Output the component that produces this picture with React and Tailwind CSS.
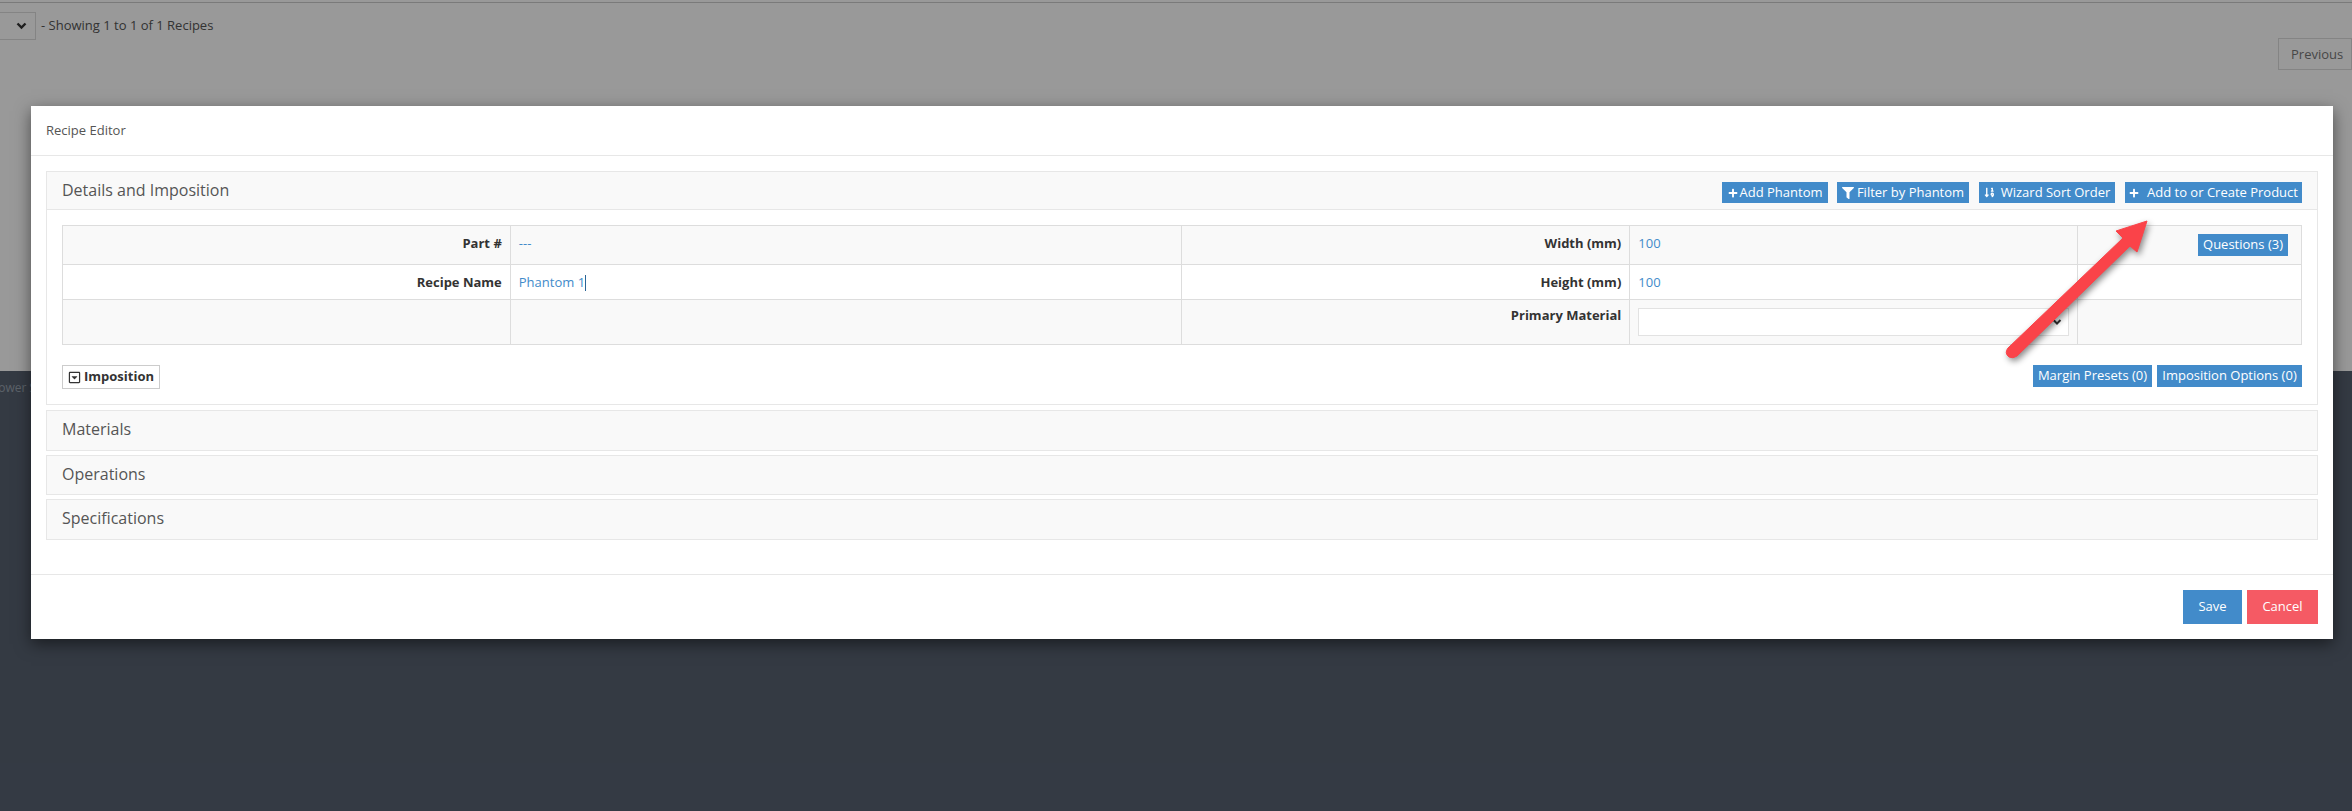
import React from "react";
import { FaPlus, FaFilter, FaSortNumericDown, FaRegCaretSquareDown } from "react-icons/fa";

const font = "font-['Open_Sans',sans-serif]";
const cell = "border border-[#ddd]";

function BlueButton({ className = "", children }) {
  return (
    <span className={`flex items-center justify-center whitespace-nowrap bg-[#428bca] text-[13px] text-white ${className}`}>
      {children}
    </span>
  );
}

function CollapsedPanel({ title, height }) {
  return (
    <div className={`flex items-center border border-[#e7e7e7] bg-[#f9f9f9] pb-[3px] pl-[15px] text-[16px] text-[#555] ${height}`}>
      {title}
    </div>
  );
}

function Arrow() {
  // red annotation pointing at the product button
  return (
    <svg
      className="absolute left-[1960px] top-[105px] drop-shadow-[2px_3px_3px_rgba(0,0,0,0.45)]"
      width="180"
      height="170"
      viewBox="1990 211 180 170"
    >
      <path
        d="M2146 221 L2115 231 L2122 238 L2007 348 Q2003 353 2008 357 Q2012 359 2016 356 L2129 246 L2136 252 Z"
        fill="#fa4349"
        stroke="#fa4349"
        strokeLinejoin="round"
      />
    </svg>
  );
}

export default function App() {
  return (
    <div className={`relative h-[811px] w-[2352px] overflow-hidden bg-white ${font}`}>
      {/* page behind the dialog */}
      <div className="h-[371px] pt-[2px]">
        <div className="h-px bg-[#ccc]" />
        <div className="flex items-center pt-[9px]">
          <div className="ml-[-2px] flex h-[28px] w-[38px] items-center justify-end border border-[#ddd] pr-[8px] text-[#333]">
            <svg width="11" height="8" viewBox="0 0 11 8">
              <path d="M1.5 1.5 L5.5 5.5 L9.5 1.5" fill="none" stroke="currentColor" strokeWidth="2.4" />
            </svg>
          </div>
          <span className="ml-[5px] text-[13px] text-[#555]">- Showing 1 to 1 of 1 Recipes</span>
        </div>
        <div className="mt-[-2px] flex justify-end">
          <span className="flex h-[32px] w-[74px] items-center border border-[#ddd] pl-[12px] pt-[1px] text-[13px] text-[#777]">
            Previous
          </span>
        </div>
      </div>
      <div className="h-[440px] bg-[#576171] pt-[8px]">
        <span className="ml-[-9px] block text-[12px] text-[#9aa3af]">Power Software</span>
      </div>

      {/* backdrop */}
      <div className="absolute inset-0 bg-black/40" />

      {/* dialog */}
      <div className="absolute left-[31px] top-[106px] h-[533px] w-[2302px] bg-white text-[#333] shadow-[0_5px_15px_rgba(0,0,0,0.5)]">
        <div className="flex h-[50px] items-center border-b border-[#e7e7e7] pl-[15px] pt-[1px] text-[13px] text-[#555]">
          Recipe Editor
        </div>

        <div className="h-[418px] px-[15px] pt-[15px]">
          <div className="h-[234px] border border-[#e7e7e7]">
            <div className="flex h-[38px] justify-between border-b border-[#e7e7e7] bg-[#f9f9f9] pl-[15px] pr-[15px] text-[16px] text-[#555]">
              <span className="self-center pb-[2px]">Details and Imposition</span>
              <div className="mt-[10px] flex self-start">
                <BlueButton className="h-[21px] w-[106px]">
                  <FaPlus className="mr-[2px] text-[10px]" />Add Phantom
                </BlueButton>
                <BlueButton className="ml-[9px] h-[21px] w-[132px]">
                  <FaFilter className="mr-[3px] text-[12px]" />Filter by Phantom
                </BlueButton>
                <BlueButton className="ml-[10px] h-[21px] w-[136px]">
                  <FaSortNumericDown className="mr-[6px] text-[11px]" />Wizard Sort Order
                </BlueButton>
                <BlueButton className="ml-[10px] h-[21px] w-[177px]">
                  <FaPlus className="mr-[8px] text-[10px]" />Add to or Create Product
                </BlueButton>
              </div>
            </div>

            <div className="px-[15px] pt-[15px]">
              <table className="w-full table-fixed border-collapse text-[13px]">
                <colgroup>
                  <col className="w-[20%]" />
                  <col className="w-[30%]" />
                  <col className="w-[20%]" />
                  <col className="w-[20%]" />
                  <col className="w-[10%]" />
                </colgroup>
                <tbody>
                  <tr className="h-[39px] bg-[#f9f9f9]">
                    <td className={`${cell} pb-[3px] pr-[8px] text-right font-bold`}>Part #</td>
                    <td className={`${cell} pb-[3px] pl-[8px] text-[#428bca]`}>---</td>
                    <td className={`${cell} pb-[3px] pr-[8px] text-right font-bold`}>Width (mm)</td>
                    <td className={`${cell} pb-[3px] pl-[8px] text-[#428bca]`}>100</td>
                    <td className={`${cell} pr-[13px]`}>
                      <BlueButton className="ml-auto h-[22px] w-[90px]">Questions (3)</BlueButton>
                    </td>
                  </tr>
                  <tr className="h-[35px]">
                    <td className={`${cell} pr-[8px] pt-[1px] text-right font-bold`}>Recipe Name</td>
                    <td className={`${cell} pl-[8px] pt-[1px] text-[#428bca]`}>
                      Phantom 1<span className="inline-block h-[16px] w-px bg-[#2a6496] align-middle" />
                    </td>
                    <td className={`${cell} pr-[8px] pt-[1px] text-right font-bold`}>Height (mm)</td>
                    <td className={`${cell} pl-[8px] pt-[1px] text-[#428bca]`}>100</td>
                    <td className={cell} />
                  </tr>
                  <tr className="h-[45px] bg-[#f9f9f9]">
                    <td className={cell} />
                    <td className={cell} />
                    <td className={`${cell} pb-[12px] pr-[8px] text-right font-bold`}>Primary Material</td>
                    <td className={`${cell} px-[8px]`}>
                      <div className="flex h-[28px] items-center justify-end border border-[#e2e2e2] bg-white pr-[6px]">
                        <svg width="10" height="7" viewBox="0 0 10 7">
                          <path d="M1.5 1 L5 4.5 L8.5 1" fill="none" stroke="#333" strokeWidth="2" />
                        </svg>
                      </div>
                    </td>
                    <td className={cell} />
                  </tr>
                </tbody>
              </table>

              <div className="mt-[20px] flex items-start justify-between">
                <span className="flex h-[24px] w-[98px] items-center border border-[#ccc] pl-[5px] text-[13px] font-bold">
                  <FaRegCaretSquareDown className="mr-[3px] text-[13px]" />Imposition
                </span>
                <div className="flex">
                  <BlueButton className="h-[22px] w-[119px]">Margin Presets (0)</BlueButton>
                  <BlueButton className="ml-[5px] h-[22px] w-[145px]">Imposition Options (0)</BlueButton>
                </div>
              </div>
            </div>
          </div>

          <div className="mt-[5px] flex flex-col gap-[4px]">
            <CollapsedPanel title="Materials" height="h-[41px]" />
            <CollapsedPanel title="Operations" height="h-[40px]" />
            <CollapsedPanel title="Specifications" height="h-[41px]" />
          </div>
        </div>

        <div className="flex h-[65px] items-start justify-end border-t border-[#e7e7e7] pr-[15px] pt-[15px] text-[13px] text-white">
          <span className="flex h-[34px] w-[59px] items-center justify-center bg-[#428bca]">Save</span>
          <span className="ml-[5px] flex h-[34px] w-[71px] items-center justify-center bg-[#f55a64]">Cancel</span>
        </div>

        <Arrow />
      </div>
    </div>
  );
}
